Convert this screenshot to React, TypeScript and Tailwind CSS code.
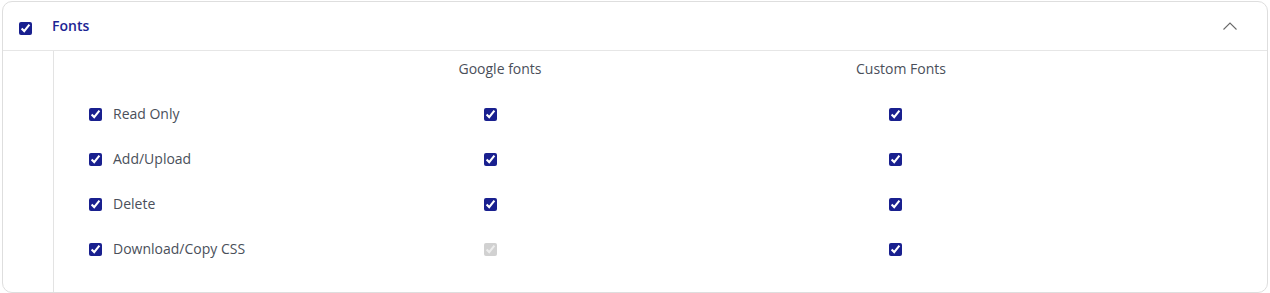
import { useState } from 'react';

const permissions = [
  { label: 'Read Only', google: true, custom: true },
  { label: 'Add/Upload', google: true, custom: true },
  { label: 'Delete', google: true, custom: true },
  { label: 'Download/Copy CSS', google: true, custom: true, googleDisabled: true },
];

function Check({ checked, disabled }: { checked: boolean; disabled?: boolean }) {
  return (
    <input
      type="checkbox"
      defaultChecked={checked}
      disabled={disabled}
      className="m-0 h-[13px] w-[13px] accent-[#19208f]"
    />
  );
}

export default function App() {
  const [open] = useState(true);

  return (
    <div className="bg-white pt-[1px] pl-[2px]" style={{ fontFamily: '"Open Sans", "Noto Sans", sans-serif' }}>
      <div className="w-[1266px] h-[292px] rounded-[10px] border border-[#dedede] overflow-hidden flex flex-col">
        {/* Header */}
        <div className="h-[49px] flex items-center border-b border-[#e6e6e6] pl-[16px] pr-[29px] shrink-0">
          <div className="w-[33px] flex items-center pt-[4px]">
            <Check checked />
          </div>
          <span className="text-[14px] font-semibold text-[#1c2594] -mt-[1px]">Fonts</span>
          <div className="ml-auto">
            <svg width="16" height="10" viewBox="0 0 16 10" fill="none">
              <polyline points="1.5,8.5 8,2 14.5,8.5" stroke="#6b6b6b" strokeWidth="1.1" />
            </svg>
          </div>
        </div>

        {/* Body */}
        {open && (
          <div className="flex flex-1">
            <div className="w-[51px] border-r border-[#e3e3e3] shrink-0" />
            <div className="flex-1 pl-[35px] text-[14px] text-[#4a4f5a]">
              <div className="grid grid-cols-[211px_400px_400px] h-[36px] items-center">
                <div />
                <div className="text-center -mt-[2px]">Google fonts</div>
                <div className="text-center pl-[2px] -mt-[2px]">Custom Fonts</div>
              </div>
              <div className="mt-[5px]">
                {permissions.map((p) => (
                  <div key={p.label} className="grid grid-cols-[211px_400px_400px] h-[45px] items-center">
                    <div className="flex items-center gap-[11px]">
                      <Check checked />
                      <span className="-mt-[2px]">{p.label}</span>
                    </div>
                    <div className="flex justify-center pr-[20px]">
                      <Check checked={p.google} disabled={p.googleDisabled} />
                    </div>
                    <div className="flex justify-center pr-[10px]">
                      <Check checked={p.custom} />
                    </div>
                  </div>
                ))}
              </div>
            </div>
          </div>
        )}
      </div>
    </div>
  );
}
